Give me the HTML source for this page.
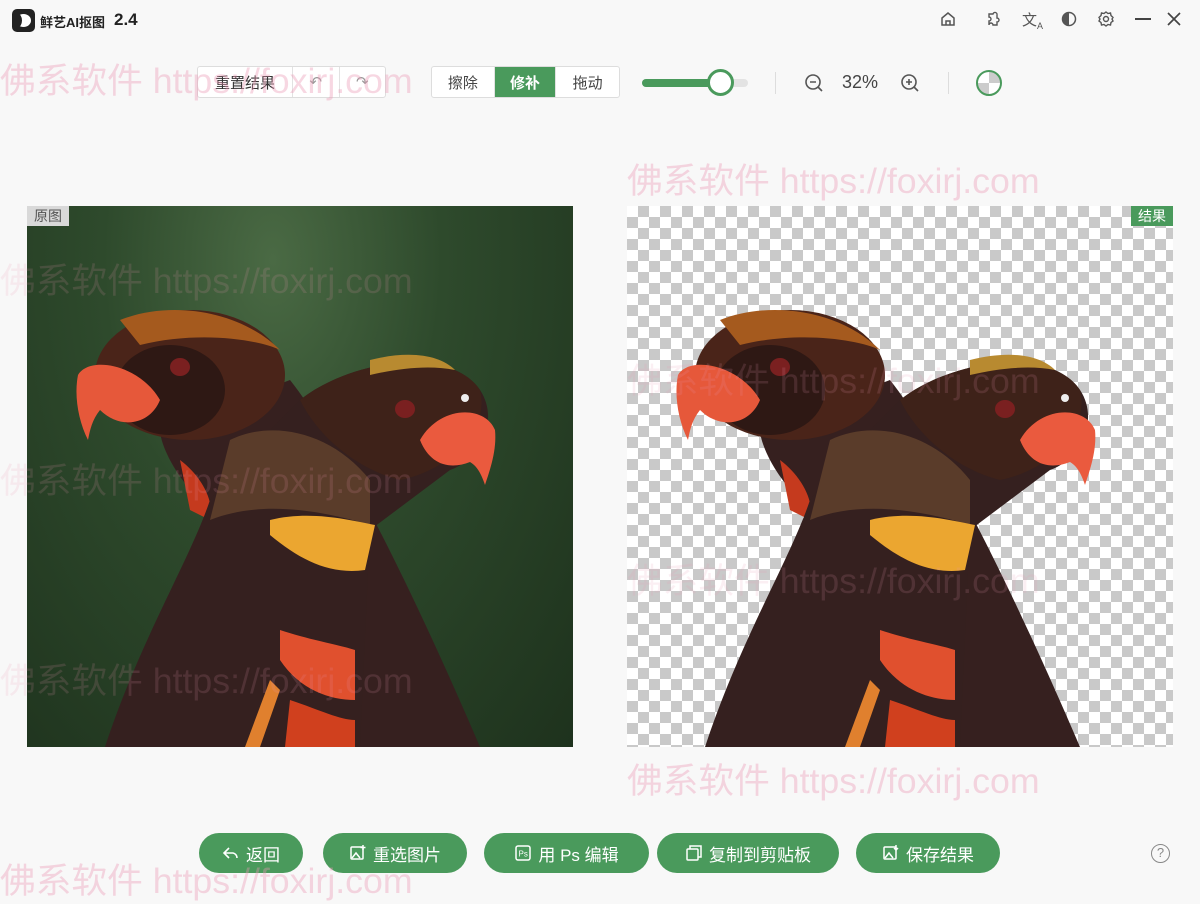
<!DOCTYPE html>
<html><head><meta charset="utf-8"><style>
*{margin:0;padding:0;box-sizing:border-box}
body{width:1200px;height:892px;background:#f8f8f8;font-family:"Liberation Sans","Noto Sans CJK SC",sans-serif;position:relative;overflow:hidden;color:#333}
.abs{position:absolute}
.wm{position:absolute;font-size:35px;color:rgba(235,150,180,.38);white-space:nowrap;z-index:5;font-family:"Liberation Sans","Noto Sans CJK SC",sans-serif;transform:scaleX(1.02);transform-origin:left}
.box{position:absolute;background:#fff;border:1px solid #ddd;border-radius:3px;display:flex;font-size:15px;height:32px;align-items:center}
.box div{height:100%;display:flex;align-items:center;justify-content:center;border-right:1px solid #e2e2e2}
.box div:last-child{border-right:none}
.btn{position:absolute;top:833px;height:40px;border-radius:20px;background:#4a9a5c;color:#fff;font-size:17px;display:flex;align-items:center;justify-content:center;gap:6px}
.btn svg{width:18px;height:18px}
.panel{position:absolute;top:206px;width:546px;height:541px;overflow:hidden}
.ico{position:absolute;top:10px}
</style></head><body>

<div class="abs" style="left:12px;top:9px;width:23px;height:23px;background:#222;border-radius:5px"></div>
<div class="abs" style="left:16px;top:14px;width:15px;height:13px;border-radius:50%;background:#fff"></div>
<div class="abs" style="left:14px;top:14px;width:8px;height:13px;border-radius:50%;background:#222"></div>
<div class="abs" style="left:40px;top:12px;font-size:13px;font-weight:bold;color:#222">鲜艺AI抠图</div>
<div class="abs" style="left:114px;top:10px;font-size:17px;font-weight:bold;color:#222">2.4</div>

<svg class="ico" style="left:939px" width="18" height="18" viewBox="0 0 18 18" fill="none" stroke="#555" stroke-width="1.5"><path d="M3 8 L9 3 L15 8 V15 H3 Z"/><path d="M7 15 V11 H11 V15"/></svg>
<svg class="ico" style="left:984px" width="18" height="18" viewBox="0 0 18 18" fill="none" stroke="#555" stroke-width="1.4"><path d="M5 4 H9 A2 2 0 0 1 13 5 V8 A2 2 0 0 1 13 12 V15 H9 A2 2 0 0 0 5 15 V11 A2 2 0 0 0 5 7 Z"/></svg>
<div class="abs" style="left:1022px;top:9px;font-size:15px;color:#555">文<sub style="font-size:9px">A</sub></div>
<svg class="ico" style="left:1060px" width="18" height="18" viewBox="0 0 18 18"><circle cx="9" cy="9" r="6.5" fill="none" stroke="#555" stroke-width="1.5"/><path d="M9 2.5 A6.5 6.5 0 0 0 9 15.5Z" fill="#555"/></svg>
<svg class="ico" style="left:1097px" width="18" height="18" viewBox="0 0 18 18" fill="none" stroke="#555" stroke-width="1.4"><circle cx="9" cy="9" r="2.5"/><path d="M9 2 L11 3.5 L13.5 3 L14 5.5 L16 7.5 L15 9 L16 11 L14 12.5 L13.5 15 L11 14.5 L9 16 L7 14.5 L4.5 15 L4 12.5 L2 11 L3 9 L2 7.5 L4 5.5 L4.5 3 L7 3.5 Z"/></svg>
<div class="abs" style="left:1135px;top:18px;width:16px;height:2px;background:#444"></div>
<svg class="ico" style="left:1165px" width="18" height="18" viewBox="0 0 18 18" stroke="#444" stroke-width="1.7"><path d="M3 3 L15 15 M15 3 L3 15"/></svg>

<div class="box" style="left:197px;top:66px;width:189px"><div style="width:96px">重置结果</div><div style="width:47px;color:#999">↶</div><div style="width:46px;color:#999">↷</div></div>
<div class="box" style="left:431px;top:66px;width:189px;overflow:hidden"><div style="width:63px;color:#444">擦除</div><div style="width:62px;background:#4a9a5c;color:#fff;font-weight:bold">修补</div><div style="width:63px;color:#444">拖动</div></div>
<div class="abs" style="left:642px;top:79px;width:106px;height:8px;border-radius:4px;background:#e3e3e3"></div>
<div class="abs" style="left:642px;top:79px;width:80px;height:8px;border-radius:4px;background:#4a9a5c"></div>
<div class="abs" style="left:707px;top:69px;width:27px;height:27px;border-radius:50%;background:#fff;border:3px solid #4a9a5c"></div>
<div class="abs" style="left:775px;top:72px;width:1px;height:22px;background:#ddd"></div>
<svg class="abs" style="left:803px;top:72px" width="22" height="22" viewBox="0 0 22 22" fill="none" stroke="#555" stroke-width="1.6"><circle cx="10" cy="10" r="7"/><path d="M15 15 L19 19 M7 10 H13"/></svg>
<div class="abs" style="left:842px;top:72px;font-size:18px;color:#444">32%</div>
<svg class="abs" style="left:899px;top:72px" width="22" height="22" viewBox="0 0 22 22" fill="none" stroke="#555" stroke-width="1.6"><circle cx="10" cy="10" r="7"/><path d="M15 15 L19 19 M7 10 H13 M10 7 V13"/></svg>
<div class="abs" style="left:948px;top:72px;width:1px;height:22px;background:#ddd"></div>
<div class="abs" style="left:976px;top:70px;width:26px;height:26px;border-radius:50%;border:2.5px solid #4a9a5c;background:conic-gradient(#ccc 0 25%,#fff 0 50%,#ccc 0 75%,#fff 0)"></div>

<div class="panel" style="left:27px;background:radial-gradient(ellipse at 45% 10%,#4a6a44 0%,#2e4a2c 40%,#1e321d 100%)">
<svg width="546" height="541"><g transform="translate(-27,-206)" id="p1">
<path d="M290 380 C330 430 400 560 480 747 L300 747 L200 500 C170 470 160 440 160 430 Z" fill="#36201f"/>
<ellipse cx="190" cy="375" rx="95" ry="65" fill="#4a2419"/>
<ellipse cx="170" cy="390" rx="55" ry="45" fill="#2e1814"/>
<path d="M120 320 C170 300 240 310 280 350 C260 340 200 330 140 345Z" fill="#a55a1e"/>
<ellipse cx="180" cy="367" rx="10" ry="9" fill="#7a2020"/>
<path d="M78 375 C90 355 140 365 160 400 C150 425 120 430 100 410 C92 420 90 430 88 440 C78 420 74 395 78 375Z" fill="#e6583a"/>
<path d="M180 460 C200 475 215 500 210 520 L190 510 Z" fill="#c53a1e"/>
<path d="M300 400 C350 360 450 345 480 390 C500 420 480 460 450 470 L370 530 L360 747 L105 747 C140 640 190 560 210 500 C240 460 280 420 300 400Z" fill="#35201f"/>
<path d="M300 400 C350 360 450 345 480 390 C490 430 450 470 400 480 C360 470 320 440 300 400Z" fill="#3e2219"/>
<path d="M370 360 C410 350 440 355 455 370 C430 365 400 368 370 375Z" fill="#b88a30"/>
<ellipse cx="405" cy="409" rx="10" ry="9" fill="#7a2020"/>
<circle cx="465" cy="398" r="4" fill="#eee"/>
<path d="M420 440 C440 405 485 405 495 430 C497 450 490 470 485 485 C480 470 475 465 470 462 C450 470 430 465 420 440Z" fill="#ea5a3e"/>
<path d="M230 440 C270 420 330 430 370 480 L370 525 C320 510 260 500 210 520 Z" fill="#5a3c2a"/>
<path d="M270 520 C310 510 350 520 375 525 L365 570 C330 575 300 560 270 535Z" fill="#eba630"/>
<path d="M280 630 C310 640 340 645 355 650 L355 700 C330 700 300 690 280 660Z" fill="#e0502e"/>
<path d="M270 680 L245 747 L260 747 L280 690Z" fill="#e0802e"/>
<path d="M290 700 C320 710 340 720 355 720 L355 747 L285 747Z" fill="#d0401e"/>
</g></svg>
<div class="abs" style="left:0;top:0;width:42px;height:20px;background:#d9d9d9;color:#555;font-size:14px;text-align:center;line-height:20px">原图</div>
</div>

<div class="panel" style="left:627px;background-color:#fff;background-image:linear-gradient(45deg,#c9c9c9 25%,transparent 25%,transparent 75%,#c9c9c9 75%),linear-gradient(45deg,#c9c9c9 25%,transparent 25%,transparent 75%,#c9c9c9 75%);background-size:22px 22px;background-position:0 0,11px 11px">
<svg width="546" height="541"><use href="#p1"/></svg>
<div class="abs" style="right:0;top:0;width:42px;height:20px;background:#4a9a5c;color:#fff;font-size:14px;text-align:center;line-height:20px">结果</div>
</div>

<div class="wm" style="left:0;top:53px">佛系软件 https://foxirj.com</div>
<div class="wm" style="left:627px;top:153px">佛系软件 https://foxirj.com</div>
<div class="wm" style="left:0;top:253px;opacity:.4">佛系软件 https://foxirj.com</div>
<div class="wm" style="left:627px;top:353px;opacity:.4">佛系软件 https://foxirj.com</div>
<div class="wm" style="left:0;top:453px;opacity:.4">佛系软件 https://foxirj.com</div>
<div class="wm" style="left:627px;top:553px;opacity:.4">佛系软件 https://foxirj.com</div>
<div class="wm" style="left:0;top:653px;opacity:.4">佛系软件 https://foxirj.com</div>
<div class="wm" style="left:627px;top:753px">佛系软件 https://foxirj.com</div>
<div class="wm" style="left:0;top:853px">佛系软件 https://foxirj.com</div>

<div class="btn" style="left:199px;width:104px"><svg viewBox="0 0 18 18" fill="none" stroke="#fff" stroke-width="1.6"><path d="M7 4 L2 9 L7 14 M2 9 H11 A5 5 0 0 1 15 14"/></svg>返回</div>
<div class="btn" style="left:323px;width:144px"><svg viewBox="0 0 18 18" fill="none" stroke="#fff" stroke-width="1.5"><rect x="2" y="3" width="12" height="12" rx="1"/><path d="M3 14 L7 9 L11 14"/><path d="M14 1 V6 M11.5 3.5 H16.5"/></svg>重选图片</div>
<div class="btn" style="left:484px;width:165px"><svg viewBox="0 0 18 18" fill="none" stroke="#fff" stroke-width="1.5"><rect x="2" y="2" width="14" height="14" rx="2"/><text x="4.5" y="12.5" font-size="8" fill="#fff" stroke="none" font-family="Liberation Sans">Ps</text></svg>用 Ps 编辑</div>
<div class="btn" style="left:657px;width:182px"><svg viewBox="0 0 18 18" fill="none" stroke="#fff" stroke-width="1.5"><rect x="2" y="5" width="11" height="11" rx="1"/><path d="M5 5 V2 H16 V13 H13"/></svg>复制到剪贴板</div>
<div class="btn" style="left:856px;width:144px"><svg viewBox="0 0 18 18" fill="none" stroke="#fff" stroke-width="1.5"><rect x="2" y="3" width="12" height="12" rx="1"/><path d="M3 14 L7 9 L11 14"/><path d="M14 1 V6 M12 4 L14 6 L16 4"/></svg>保存结果</div>
<div class="abs" style="left:1151px;top:844px;width:19px;height:19px;border-radius:50%;border:1.5px solid #888;color:#888;font-size:13px;text-align:center;line-height:16px">?</div>
</body></html>
